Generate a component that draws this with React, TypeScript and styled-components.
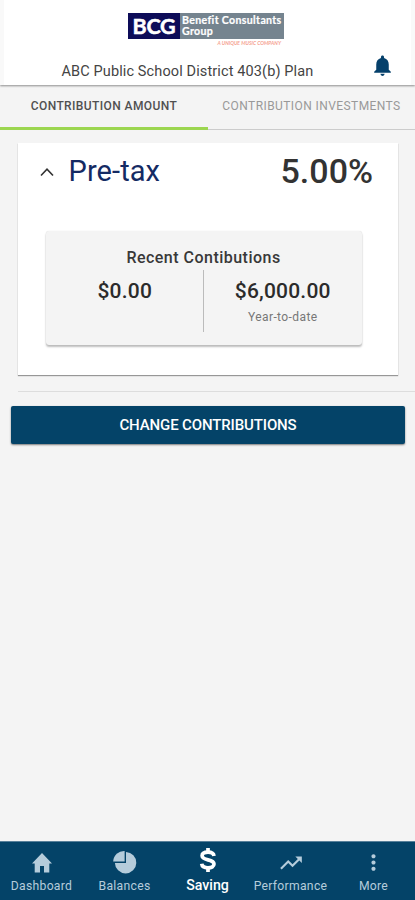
import React from 'react';
import styled, { createGlobalStyle } from 'styled-components';
import { MdNotifications, MdMoreVert, MdTrendingUp } from 'react-icons/md';

const GlobalStyle = createGlobalStyle`
  * { box-sizing: border-box; }
  body { margin: 0; background: #f4f4f4; font-family: Roboto, sans-serif; }
`;

const Screen = styled.div`
  width: 415px;
  height: 900px;
  display: flex;
  flex-direction: column;
  background: #f4f4f4;
  overflow: hidden;
`;

const Header = styled.header`
  flex: none;
  height: 85px;
  display: flex;
  flex-direction: column;
  padding: 13px 0 0;
  border: solid #f9f9f9;
  border-width: 0 4px;
  background: #fff;
  box-shadow: 0 1px 2px rgba(0, 0, 0, 0.42);
  z-index: 1;
`;

const Logo = styled.div`
  width: 156px;
  height: 26px;
  margin-left: 124px;
  display: flex;
  color: #fff;
`;

const LogoMark = styled.div`
  width: 52px;
  height: 26px;
  background: #0d0c58;
  font: 700 21.5px/27px Lato, sans-serif;
  letter-spacing: -0.2px;
  text-align: center;
  -webkit-text-stroke: 0.5px #fff;
`;

const LogoName = styled.div`
  flex: 1;
  display: flex;
  flex-direction: column;
  padding: 2px 0 0 2px;
  background: #75848f;
  font: 700 10.6px/10.5px Lato, sans-serif;
  letter-spacing: 0.34px;
  white-space: nowrap;
  -webkit-text-stroke: 0.2px #fff;
`;

const Tagline = styled.div`
  height: 8px;
  margin-left: 213.5px;
  font: italic 700 5px/8px Lato, sans-serif;
  color: #f5a292;
  white-space: nowrap;
`;

const PlanRow = styled.div`
  display: flex;
  height: 38px;
  padding-left: 57.5px;
`;

const PlanName = styled.div`
  width: 309.5px;
  padding-top: 15px;
  font-size: 14.5px;
  line-height: 20px;
  letter-spacing: 0.12px;
  color: #444;
  white-space: nowrap;
`;

const Bell = styled(MdNotifications)`
  width: 25px;
  height: 25px;
  margin-top: 6px;
  margin-left: -1px;
  color: #05406b;
`;

const Tabs = styled.div`
  flex: none;
  height: 46px;
  display: flex;
`;

const Tab = styled.div<{ $active?: boolean }>`
  width: ${p => (p.$active ? 208 : 207)}px;
  display: flex;
  align-items: flex-start;
  justify-content: center;
  padding-top: 12px;
  font-size: 12px;
  line-height: 18px;
  letter-spacing: ${p => (p.$active ? 0.4 : 0.42)}px;
  font-weight: ${p => (p.$active ? 500 : 400)};
  color: ${p => (p.$active ? '#505050' : '#999')};
  background: linear-gradient(${p => (p.$active ? '#9cd650, #9cd650' : '#ccc, #ccc')}) 0 ${p => (p.$active ? 42 : 44)}px / 100% ${p => (p.$active ? 3 : 1)}px no-repeat;
  white-space: nowrap;
`;

const Card = styled.section`
  flex: none;
  width: 380px;
  height: 232px;
  margin: 12px 0 0 18px;
  background: #fff;
  box-shadow: 0 1px 1px rgba(0, 0, 0, 0.38);
`;

const Source = styled.div`
  display: flex;
  align-items: center;
  height: 56px;
  padding: 0 25px 0 22px;
`;

const Chevron = styled.svg`
  width: 14px;
  height: 10px;
  margin-top: 2px;
  fill: none;
  stroke: #333;
  stroke-width: 1.6;
`;

const SourceName = styled.div`
  flex: 1;
  padding-left: 14.5px;
  font-size: 29px;
  letter-spacing: 0.1px;
  color: #142a63;
`;

const Rate = styled.div`
  font-size: 34px;
  font-weight: 500;
  color: #333;
`;

const Recent = styled.div`
  width: 316px;
  height: 114px;
  margin: 32px 0 0 27.5px;
  padding-top: 17px;
  border-radius: 3px;
  background: #f4f4f4;
  box-shadow: 0 2px 2px rgba(0, 0, 0, 0.26), 0 0 1px rgba(0, 0, 0, 0.16);
`;

const RecentTitle = styled.div`
  font-size: 16px;
  font-weight: 500;
  line-height: 20px;
  letter-spacing: 0.48px;
  color: #383838;
  text-align: center;
`;

const Amounts = styled.div`
  display: flex;
  width: 315px;
  height: 62px;
  margin-top: 2px;
`;

const AmountCell = styled.div`
  flex: 1;
  padding-left: 1.5px;
  text-align: center;
  & + & { border-left: 1px solid #bbb; }
`;

const Amount = styled.div`
  padding-top: 9px;
  font-size: 21px;
  font-weight: 500;
  line-height: 24px;
  letter-spacing: 0.2px;
  color: #2b2b2b;
`;

const Period = styled.div`
  padding-top: 6px;
  font-size: 12px;
  line-height: 16px;
  letter-spacing: 0.4px;
  color: #777;
`;

const Divider = styled.div`
  flex: none;
  height: 1px;
  margin: 16px 0 0 18px;
  background: #ddd;
`;

const ChangeButton = styled.button`
  flex: none;
  height: 38px;
  margin: 14px 10px 0 11px;
  padding: 0;
  border: 0;
  border-radius: 2px;
  background: #044368;
  box-shadow: 0 1px 2px rgba(0, 0, 0, 0.5);
  color: #fff;
  font: 500 15px/39px Roboto, sans-serif;
  letter-spacing: -0.13px;
`;

const Nav = styled.nav`
  height: 59px;
  margin-top: auto;
  display: grid;
  grid-template-columns: repeat(5, 83px);
  background: #044368;
  box-shadow: inset 0 1px 0 #58809a;
`;

const NavItem = styled.div<{ $active?: boolean }>`
  display: flex;
  flex-direction: column;
  align-items: center;
  padding-top: ${p => (p.$active ? 5 : 8)}px;
  font-size: ${p => (p.$active ? 14.2 : 12.2)}px;
  font-weight: ${p => (p.$active ? 500 : 400)};
  letter-spacing: ${p => (p.$active ? 0 : 0.28)}px;
  color: ${p => (p.$active ? '#fff' : '#b5ccdb')};
`;

const NavIcon = styled.div`
  height: 27px;
  display: flex;
  align-items: center;
  justify-content: center;
`;

const NavLabel = styled.div<{ $active?: boolean }>`
  padding-top: ${p => (p.$active ? 3 : 1)}px;
  line-height: 18px;
`;

const HomeIcon = () => (
  <svg width="22" height="22" viewBox="0 0 22 22" fill="currentColor">
    <path d="M11 1L1 11.6H3.7V20.6H9V14H13V20.6H18.3V11.6H21Z" />
  </svg>
);

const PieIcon = () => (
  <svg width="25" height="25" viewBox="0 0 25 25" fill="currentColor">
    <path d="M14 2V12.9H2.9A10.7 10.7 0 1 0 14 2Z" />
    <path d="M12.6 1V11.5H1.2A10.9 10.9 0 0 1 12.6 1Z" />
  </svg>
);

const DollarIcon = () => (
  <svg width="18" height="26" viewBox="0 0 18 26" fill="none" stroke="#fff" strokeWidth="3.7">
    <path d="M15 9C14.7 6.6 12.4 5.1 9 5.1C5.4 5.1 3.1 6.5 3.1 8.8C3.1 11.2 5.7 12.1 9 12.9C12.5 13.7 15 14.7 15 17.1C15 19.4 12.6 20.9 9 20.9C5.4 20.9 3 19.3 2.7 16.8" />
    <path d="M9 1V5M9 21V25" />
  </svg>
);

const items = [
  { label: 'Dashboard', icon: <HomeIcon /> },
  { label: 'Balances', icon: <PieIcon /> },
  { label: 'Saving', icon: <DollarIcon />, active: true },
  { label: 'Performance', icon: <MdTrendingUp size={26} /> },
  { label: 'More', icon: <MdMoreVert size={25} /> },
];

export default function App() {
  return (
    <Screen>
      <GlobalStyle />
      <Header>
        <Logo>
          <LogoMark>BCG</LogoMark>
          <LogoName>
            <span>Benefit Consultants</span>
            <span>Group</span>
          </LogoName>
        </Logo>
        <Tagline>A UNIQUE MUSIC COMPANY</Tagline>
        <PlanRow>
          <PlanName>ABC Public School District 403(b) Plan</PlanName>
          <Bell />
        </PlanRow>
      </Header>
      <Tabs>
        <Tab $active>CONTRIBUTION AMOUNT</Tab>
        <Tab>CONTRIBUTION INVESTMENTS</Tab>
      </Tabs>
      <Card>
        <Source>
          <Chevron viewBox="0 0 14 10"><path d="M1 8.5L7 2.2L13 8.5" /></Chevron>
          <SourceName>Pre-tax</SourceName>
          <Rate>5.00%</Rate>
        </Source>
        <Recent>
          <RecentTitle>Recent Contibutions</RecentTitle>
          <Amounts>
            <AmountCell><Amount>$0.00</Amount></AmountCell>
            <AmountCell>
              <Amount>$6,000.00</Amount>
              <Period>Year-to-date</Period>
            </AmountCell>
          </Amounts>
        </Recent>
      </Card>
      <Divider />
      <ChangeButton>CHANGE CONTRIBUTIONS</ChangeButton>
      <Nav>
        {items.map(item => (
          <NavItem key={item.label} $active={item.active}>
            <NavIcon>{item.icon}</NavIcon>
            <NavLabel $active={item.active}>{item.label}</NavLabel>
          </NavItem>
        ))}
      </Nav>
    </Screen>
  );
}
